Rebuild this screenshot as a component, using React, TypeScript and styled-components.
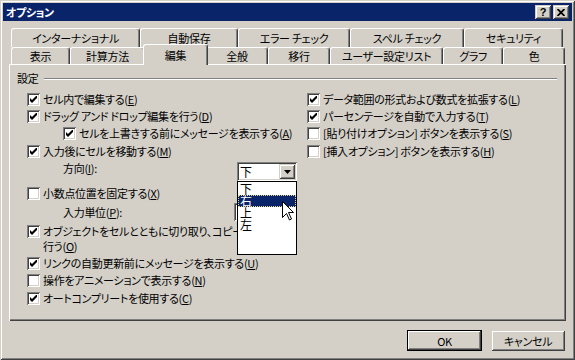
import React from 'react'
import styled, { createGlobalStyle } from 'styled-components'

const GlobalStyle = createGlobalStyle`
  body { margin: 0; overflow: hidden; background: #d4d0c8; }
  * { box-sizing: border-box; }
`

const raised = `inset 1px 1px #d4d0c8, inset -1px -1px #404040, inset 2px 2px #ffffff, inset -2px -2px #808080`
const sunken = `inset 1px 1px #808080, inset -1px -1px #ffffff, inset 2px 2px #404040, inset -2px -2px #d4d0c8`

const Window = styled.div`
  width: 575px;
  height: 360px;
  padding: 3px;
  display: flex;
  flex-direction: column;
  background: #d4d0c8;
  box-shadow: ${raised};
  font-family: "Noto Sans CJK JP", "Noto Sans", sans-serif;
  font-feature-settings: "palt";
  font-size: 11px;
  letter-spacing: -0.3px;
  color: #000;
`

const TitleBar = styled.div`
  height: 18px;
  display: flex;
  align-items: center;
  padding: 0 3px 0 3px;
  background: #0a246a;
  color: #fff;
  font-weight: 700;
  font-size: 11px;
  letter-spacing: -0.4px;
`

const CaptionButtons = styled.div`
  margin-left: auto;
  display: flex;
  gap: 2px;
`

const CaptionButton = styled.div`
  width: 16px;
  height: 14px;
  display: flex;
  align-items: center;
  justify-content: center;
  background: #d4d0c8;
  box-shadow: ${raised};
  color: #000;
  font-family: "Liberation Sans", sans-serif;
  font-weight: 700;
  font-size: 11px;
  line-height: 1;
`

const Body = styled.div`
  flex: 1;
  display: flex;
  flex-direction: column;
  padding: 7px 6px 0 6px;
`

const TabStrip = styled.div`
  display: flex;
  flex-direction: column;
  padding-left: 2px;
`

const TabRow = styled.div<{ $h: number }>`
  height: ${p => p.$h}px;
  display: flex;
  align-items: flex-end;
`

const Tab = styled.div<{ $w: number; $h: number; $active?: boolean }>`
  width: ${p => p.$w}px;
  height: ${p => p.$h}px;
  flex: none;
  display: flex;
  align-items: center;
  justify-content: center;
  background: #d4d0c8;
  border-top: 1px solid #fff;
  border-left: 1px solid #fff;
  border-right: 1px solid #404040;
  border-radius: 3px 3px 0 0;
  box-shadow: inset -1px 0 #808080;
  white-space: nowrap;
  position: relative;
  z-index: ${p => (p.$active ? 3 : 0)};
  margin: ${p => (p.$active ? '0 -2px -1px -2px' : '0')};
`

const Panel = styled.div`
  height: 257px;
  position: relative;
  z-index: 1;
  padding: 7px 0 0 8px;
  background: #d4d0c8;
  box-shadow: inset 1px 1px #ffffff, inset -1px -1px #404040, inset -2px -2px #808080;
`

const Heading = styled.div`
  height: 14px;
  display: flex;
  align-items: center;
`

const Etched = styled.div`
  flex: 1;
  height: 2px;
  margin: 2px 9px 0 6px;
  border-top: 1px solid #808080;
  border-bottom: 1px solid #fff;
`

const Columns = styled.div`
  margin: 5px 0 0 10px;
  display: grid;
  grid-template-columns: 280px 1fr;
`

const Column = styled.div`
  display: flex;
  flex-direction: column;
`

const Row = styled.div<{ $h: number; $indent?: number; $top?: boolean }>`
  height: ${p => p.$h}px;
  display: flex;
  align-items: ${p => (p.$top ? 'flex-start' : 'center')};
  padding-left: ${p => p.$indent ?? 0}px;
  padding-top: ${p => (p.$top ? 2 : 0)}px;
  white-space: nowrap;
  line-height: 15px;
`

const Box = styled.div<{ $top?: boolean }>`
  width: 13px;
  height: 13px;
  flex: none;
  margin-right: 3px;
  margin-top: ${p => (p.$top ? 1 : 0)}px;
  padding: 3px;
  background: #fff;
  box-shadow: ${sunken};
`

const Label = styled.span<{ $w?: number }>`
  display: inline-block;
  width: ${p => (p.$w ? `${p.$w}px` : 'auto')};
  line-height: 13px;
`

const Clip = styled.span`
  display: block;
  max-width: 254px;
  overflow: hidden;
`

const Combo = styled.div`
  width: 60px;
  height: 19px;
  position: relative;
  display: flex;
  align-items: center;
  padding: 2px 2px 2px 3px;
  background: #fff;
  box-shadow: ${sunken};
  z-index: 5;
  font-size: 12px;
`

const ComboText = styled.span`
  flex: 1;
  line-height: 13px;
`

const DropButton = styled.div`
  width: 16px;
  height: 15px;
  display: flex;
  align-items: center;
  justify-content: center;
  background: #d4d0c8;
  box-shadow: ${raised};
`

const DropList = styled.div`
  position: absolute;
  left: 0;
  top: 19px;
  width: 60px;
  height: 74px;
  padding-top: 1px;
  background: #fff;
  border: 1px solid #000;
`

const Item = styled.div<{ $sel?: boolean }>`
  height: 12px;
  line-height: 12px;
  padding-left: 2px;
  background: ${p => (p.$sel ? '#0a246a' : 'transparent')};
  color: ${p => (p.$sel ? '#fff' : '#000')};
  outline: ${p => (p.$sel ? '1px dotted #e8d890' : 'none')};
  outline-offset: -1px;
`

const Cursor = styled.svg`
  position: absolute;
  left: 45px;
  top: 39px;
  z-index: 6;
`

const Edit = styled.div`
  width: 50px;
  height: 18px;
  background: #fff;
  box-shadow: ${sunken};
`

const Footer = styled.div`
  margin-top: 9px;
  display: flex;
  justify-content: flex-end;
  gap: 9px;
  padding-right: 1px;
`

const Button = styled.div<{ $default?: boolean; $w: number }>`
  width: ${p => p.$w}px;
  height: 21px;
  display: flex;
  align-items: center;
  justify-content: center;
  background: #d4d0c8;
  border: ${p => (p.$default ? '1px solid #000' : 'none')};
  box-shadow: ${p => (p.$default ? 'inset -1px -1px #404040, inset 1px 1px #fff, inset -2px -2px #808080' : raised)};
`

const Check = ({ on, top }: { on: boolean; top?: boolean }) => (
  <Box $top={top}>
    {on && (
      <svg width="7" height="7" viewBox="0 0 7 7" style={{ display: 'block' }}>
        <path d="M0 2 L2 4 L7 -1 L7 2 L2 7 L0 5 Z" fill="#000" />
      </svg>
    )}
  </Box>
)

const K = ({ k }: { k: string }) => (
  <>
    (<u>{k}</u>)
  </>
)

const row1 = [
  { t: 'インターナショナル', w: 129 },
  { t: '自動保存', w: 98 },
  { t: 'エラー チェック', w: 112 },
  { t: 'スペル チェック', w: 114 },
  { t: 'セキュリティ', w: 99 },
]

const row2 = [
  { t: '表示', w: 59 },
  { t: '計算方法', w: 75 },
  { t: '編集', w: 65, active: true },
  { t: '全般', w: 62 },
  { t: '移行', w: 62 },
  { t: 'ユーザー設定リスト', w: 113 },
  { t: 'グラフ', w: 60 },
  { t: '色', w: 62 },
]

const right = [
  { t: 'データ範囲の形式および数式を拡張する', k: 'L', on: true, h: 18 },
  { t: 'パーセンテージを自動で入力する', k: 'T', on: true, h: 17 },
  { t: '[貼り付けオプション] ボタンを表示する', k: 'S', on: false, h: 17 },
  { t: '[挿入オプション] ボタンを表示する', k: 'H', on: false, h: 18 },
]

export default function App() {
  return (
    <>
      <GlobalStyle />
      <Window>
        <TitleBar>
          オプション
          <CaptionButtons>
            <CaptionButton>?</CaptionButton>
            <CaptionButton>
              <svg width="8" height="7" viewBox="0 0 8 7">
                <path d="M0.5 0 L7.5 7 M7.5 0 L0.5 7" stroke="#000" strokeWidth="1.8" />
              </svg>
            </CaptionButton>
          </CaptionButtons>
        </TitleBar>
        <Body>
          <TabStrip>
            <TabRow $h={19}>
              {row1.map(t => (
                <Tab key={t.t} $w={t.w} $h={19}>{t.t}</Tab>
              ))}
            </TabRow>
            <TabRow $h={17}>
              {row2.map(t => (
                <Tab key={t.t} $w={t.w} $h={t.active ? 21 : 17} $active={t.active}>{t.t}</Tab>
              ))}
            </TabRow>
          </TabStrip>
          <Panel>
            <Heading>
              設定
              <Etched />
            </Heading>
            <Columns>
              <Column>
                <Row $h={18}><Check on />セル内で編集する<K k="E" /></Row>
                <Row $h={17}><Check on />ドラッグ アンド ドロップ編集を行う<K k="D" /></Row>
                <Row $h={17} $indent={36}><Check on />セルを上書きする前にメッセージを表示する<K k="A" /></Row>
                <Row $h={18}><Check on />入力後にセルを移動する<K k="M" /></Row>
                <Row $h={24} $indent={36} $top>
                  <Label $w={174}>方向(<u>I</u>):</Label>
                  <Combo>
                    <ComboText>下</ComboText>
                    <DropButton>
                      <svg width="7" height="4" viewBox="0 0 7 4">
                        <path d="M0 0 H7 L3.5 4 Z" fill="#000" />
                      </svg>
                    </DropButton>
                    <DropList>
                      <Item>下</Item>
                      <Item $sel>右</Item>
                      <Item>上</Item>
                      <Item>左</Item>
                    </DropList>
                    <Cursor width="12" height="20" viewBox="0 0 12 20">
                      <path d="M0.5 0.5 V16.5 L4.5 12.5 L7.5 19 L9.5 18 L6.5 11.5 H11.5 Z" fill="#fff" stroke="#000" strokeWidth="1" />
                    </Cursor>
                  </Combo>
                </Row>
                <Row $h={18}><Check on={false} />小数点位置を固定する<K k="X" /></Row>
                <Row $h={20} $indent={36}>
                  <Label $w={171}>入力単位(<u>P</u>):</Label>
                  <Edit />
                </Row>
                <Row $h={32} $top>
                  <Check on top />
                  <Clip>
                    オブジェクトをセルとともに切り取り、コピー、並べ替えを
                    <br />
                    行う<K k="O" />
                  </Clip>
                </Row>
                <Row $h={18}><Check on />リンクの自動更新前にメッセージを表示する<K k="U" /></Row>
                <Row $h={17}><Check on={false} />操作をアニメーションで表示する<K k="N" /></Row>
                <Row $h={18}><Check on />オートコンプリートを使用する<K k="C" /></Row>
              </Column>
              <Column>
                {right.map(r => (
                  <Row key={r.k} $h={r.h}><Check on={r.on} />{r.t}<K k={r.k} /></Row>
                ))}
              </Column>
            </Columns>
          </Panel>
          <Footer>
            <Button $default $w={75}>OK</Button>
            <Button $w={74}>キャンセル</Button>
          </Footer>
        </Body>
      </Window>
    </>
  )
}
